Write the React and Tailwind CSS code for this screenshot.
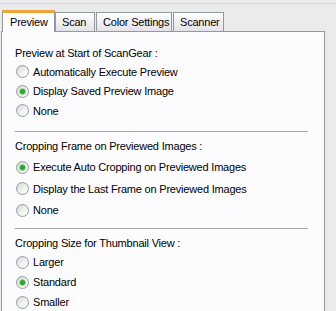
import React from "react"

const Radio = ({ checked, label, h = "h-[19.5px]" }) => (
  <div className={`flex items-center ${h}`}>
    <span className="w-[13px] h-[13px] ml-[1px] rounded-full border border-[#8f9aa6] bg-[linear-gradient(135deg,#d8d8d2,#f4f4f0_60%,#ffffff)] flex items-center justify-center">
      {checked ? <span className="block w-[5px] h-[5px] rounded-full bg-[#2fa22f] ring-1 ring-[#9fd59f]" /> : null}
    </span>
    <span className="ml-[4px]">{label}</span>
  </div>
)

const Tab = ({ label, active, className = "" }) =>
  active ? (
    <div className={`relative z-10 h-[22px] -mb-px pl-[7px] pt-[2px] whitespace-nowrap bg-[#fcfcfe] border-x border-[#919b9c] border-t-[3px] border-t-[#f1a43a] ${className}`}>
      {label}
    </div>
  ) : (
    <div className={`h-[19px] pl-[6px] pt-[2px] whitespace-nowrap bg-[linear-gradient(#ffffff,#e2e2e8)] border border-b-0 border-[#919b9c] ${className}`}>
      {label}
    </div>
  )

const Title = ({ children, className = "" }) => (
  <div className={`h-[14px] ${className}`}>{children}</div>
)

const App = () => {
  return (
    <div className="w-[336px] h-[311px] overflow-hidden bg-[#ebebee] text-[11px] leading-[14px] tracking-[-0.2px] text-black font-['Liberation_Sans',Arial,sans-serif]">
      <div className="h-[4px] border-b border-[#d6d6da]" />
      <div className="pl-[1px] pt-[5px]">
        <div className="flex items-end h-[22px] pl-[1px]">
          <Tab label="Preview" active className="w-[53px]" />
          <Tab label="Scan" className="w-[40px]" />
          <Tab label="Color Settings" className="w-[76px] ml-[1px]" />
          <Tab label="Scanner" className="w-[51px] ml-[1px]" />
        </div>
        <div className="w-[324px] h-[300px] bg-[#fcfcfe] border border-[#919b9c] pl-[13px] pr-[14px] pt-[14px]">
          <Title>Preview at Start of ScanGear :</Title>
          <div className="mt-[2px]">
            <Radio label="Automatically Execute Preview" />
            <Radio label="Display Saved Preview Image" checked />
            <Radio label="None" />
          </div>
          <div className="h-px bg-[#a7a7aa] mt-[10px] mr-[2px]" />
          <Title className="mt-[7px]">Cropping Frame on Previewed Images :</Title>
          <div className="mt-[4px]">
            <Radio label="Execute Auto Cropping on Previewed Images" checked h="h-[21.5px]" />
            <Radio label="Display the Last Frame on Previewed Images" h="h-[21.5px]" />
            <Radio label="None" h="h-[21.5px]" />
          </div>
          <div className="h-px bg-[#a7a7aa] mt-[7px] mr-[2px]" />
          <Title className="mt-[7px]">Cropping Size for Thumbnail View :</Title>
          <div className="mt-[2px]">
            <Radio label="Larger" h="h-[20px]" />
            <Radio label="Standard" checked h="h-[20px]" />
            <Radio label="Smaller" h="h-[20px]" />
          </div>
        </div>
      </div>
    </div>
  )
}

export default App
